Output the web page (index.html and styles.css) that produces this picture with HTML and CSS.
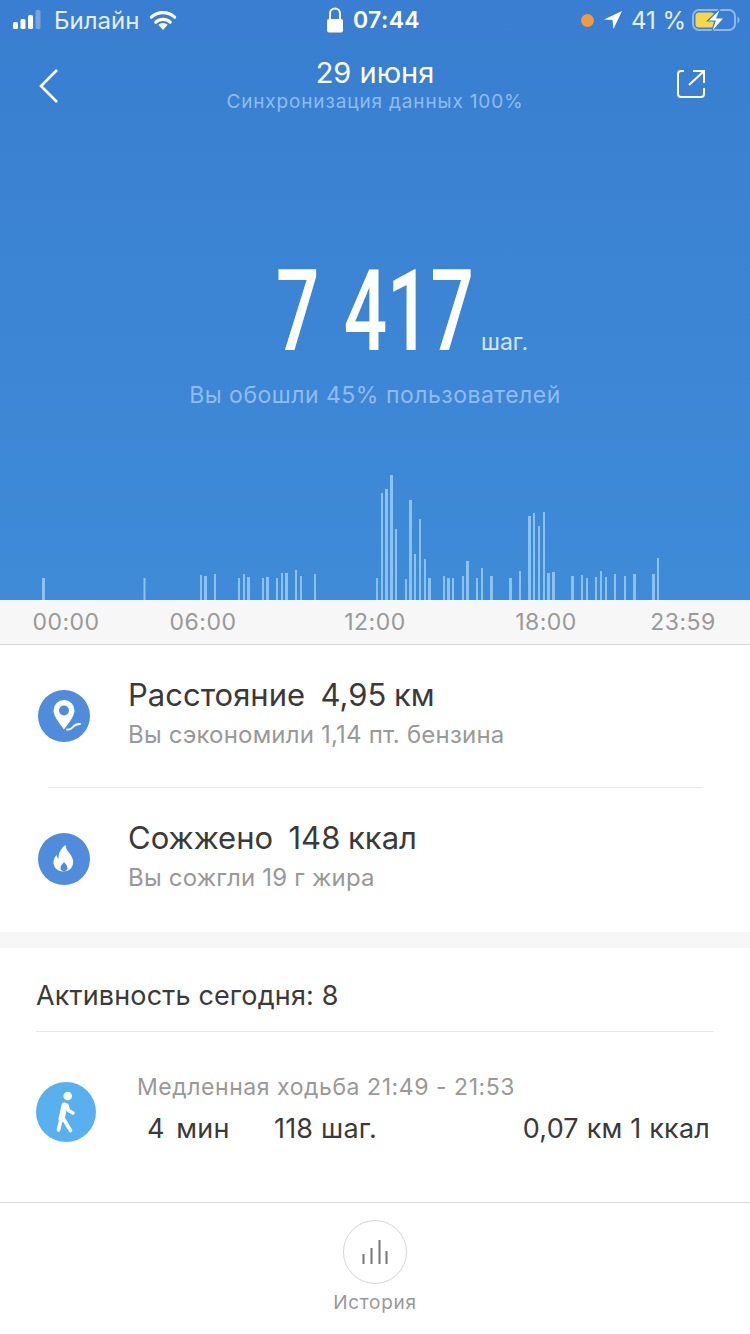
FILE: index.html
```html
<!DOCTYPE html>
<html lang="ru">
<head>
<meta charset="utf-8">
<title>Шаги</title>
<link rel="stylesheet" href="styles.css">
</head>
<body>
<div class="screen">
  <header class="hero">
    <div class="status">
      <div class="status-left">
        <svg class="signal" width="36" height="20" viewBox="0 0 36 20"><rect x="1" y="12" width="5" height="7" rx="1.500" fill="#fff"/><rect x="8.500" y="9" width="5" height="10" rx="1.500" fill="#fff"/><rect x="16" y="5" width="5" height="14" rx="1.500" fill="#fff"/><rect x="23.500" y="0" width="5" height="19" rx="1.500" fill="#fff" opacity=".3"/></svg>
        <span class="carrier">Билайн</span>
        <svg class="wifi" width="30" height="22" viewBox="0 0 30 22"><path d="M15 21l-4.600-5.200a6.800 6.800 0 0 1 9.200 0z" fill="#fff"/><path d="M7.800 13.200a10.600 10.600 0 0 1 14.400 0M3.400 8.200a17 17 0 0 1 23.200 0" fill="none" stroke="#fff" stroke-width="3.200" stroke-linecap="round"/></svg>
      </div>
      <div class="status-center">
        <svg class="lock" width="18" height="26" viewBox="0 0 18 26"><path d="M4 13V6.500a5 5 0 0 1 10 0V13" fill="none" stroke="#fff" stroke-width="2"/><rect x="1" y="12" width="16" height="13.500" rx="2" fill="#fff"/></svg>
        <span class="clock">07:44</span>
      </div>
      <div class="status-right">
        <span class="orange-dot"></span>
        <svg class="arrow" width="20" height="20" viewBox="0 0 20 20"><path d="M19 1L1 9.500l8.500.5L10.500 19z" fill="#fff"/></svg>
        <span class="percent">41 %</span>
        <svg class="battery" width="48" height="26" viewBox="0 0 48 26"><rect x="1" y="3" width="42" height="20" rx="6" fill="none" stroke="#8fb8e8" stroke-width="2"/><rect x="3.500" y="5.500" width="19" height="15" rx="3.500" fill="#f7d64a"/><path d="M45.500 9.500a4 4 0 0 1 0 7z" fill="#8fb8e8"/><path d="M29 0L14 14.500h8L19 26l15-15.500h-8z" fill="#3a7fd0"/><path d="M27.500 3L17 13.500h7L20.500 23.500 31 11.500h-7z" fill="#fff"/></svg>
      </div>
    </div>
    <nav class="nav">
      <svg class="back" width="22" height="36" viewBox="0 0 22 36"><path d="M19 2L3 18l16 16" fill="none" stroke="#fff" stroke-width="2.600"/></svg>
      <div class="nav-title">
        <div class="date">29 июня</div>
        <div class="sync">Синхронизация данных 100%</div>
      </div>
      <svg class="share" width="28" height="28" viewBox="0 0 28 28"><path d="M7 1H4a3 3 0 0 0-3 3v20a3 3 0 0 0 3 3h20a3 3 0 0 0 3-3v-6M12 15L27 1M16 1h11v12" fill="none" stroke="#fff" stroke-width="2"/></svg>
    </nav>
    <div class="total">
      <span class="steps"><span class="steps-num">7 417</span></span><span class="steps-unit">шаг.</span>
    </div>
    <div class="rank">Вы обошли 45% пользователей</div>
    <svg class="chart" width="750" height="130" viewBox="0 470 750 130">
      <g fill="#8cc2f2">
        <rect x="42" y="578" width="3" height="22"/><rect x="143.500" y="578" width="2" height="22"/><rect x="200" y="575" width="2" height="25"/><rect x="204" y="576" width="3" height="24"/><rect x="214" y="574" width="2" height="26"/><rect x="238" y="578" width="2" height="22"/><rect x="243" y="574" width="2" height="26"/><rect x="247" y="577" width="3" height="23"/><rect x="262" y="578" width="2" height="22"/><rect x="266" y="577" width="3" height="23"/><rect x="276" y="578" width="2" height="22"/><rect x="281" y="573" width="2" height="27"/><rect x="285" y="573" width="3" height="27"/><rect x="295" y="570" width="2" height="30"/><rect x="300" y="576" width="2" height="24"/><rect x="314" y="574" width="2" height="26"/>
        <rect x="376" y="578" width="2" height="22"/><rect x="381" y="493" width="2" height="107"/><rect x="385" y="489" width="3" height="111"/><rect x="390" y="475" width="3" height="125"/><rect x="395" y="529" width="2" height="71"/><rect x="405" y="579" width="2" height="21"/><rect x="409" y="500" width="3" height="100"/><rect x="414" y="554" width="2" height="46"/><rect x="419" y="519" width="2" height="81"/><rect x="424" y="559" width="2" height="41"/><rect x="428" y="578" width="3" height="22"/><rect x="443" y="576" width="2" height="24"/><rect x="447" y="578" width="3" height="22"/><rect x="452" y="578" width="2" height="22"/><rect x="462" y="576" width="2" height="24"/><rect x="466" y="561" width="3" height="39"/><rect x="476" y="578" width="2" height="22"/><rect x="481" y="568" width="2" height="32"/><rect x="490" y="576" width="3" height="24"/>
        <rect x="509" y="578" width="3" height="22"/><rect x="519" y="571" width="2" height="29"/><rect x="528" y="516" width="3" height="84"/><rect x="533" y="513" width="2" height="87"/><rect x="538" y="526" width="2" height="74"/><rect x="543" y="512" width="2" height="88"/><rect x="547" y="573" width="3" height="27"/><rect x="552" y="572" width="3" height="28"/><rect x="571" y="576" width="3" height="24"/><rect x="581" y="575" width="2" height="25"/><rect x="586" y="578" width="2" height="22"/><rect x="595" y="577" width="2" height="23"/><rect x="600" y="571" width="2" height="29"/><rect x="605" y="577" width="2" height="23"/><rect x="614" y="574" width="2" height="26"/><rect x="624" y="576" width="2" height="24"/><rect x="633" y="574" width="3" height="26"/><rect x="652" y="574" width="3" height="26"/><rect x="657" y="558" width="2" height="42"/>
      </g>
    </svg>
  </header>

  <div class="hours">
    <span>00:00</span><span>06:00</span><span>12:00</span><span>18:00</span><span>23:59</span>
  </div>

  <section class="summary">
    <div class="metric">
      <svg class="metric-icon" width="52" height="52" viewBox="0 0 52 52"><circle cx="26" cy="26" r="26" fill="#4f8cdc"/><path fill-rule="evenodd" d="M26 10a10.500 10.500 0 0 1 10.500 10.500c0 6-6 12.500-10.500 19C21.500 33 15.500 26.500 15.500 20.500A10.500 10.500 0 0 1 26 10zm0 5.500a5 5 0 1 0 0 10 5 5 0 0 0 0-10z" fill="#fff"/><path d="M29 39.500c3 .3 4.500-.5 6-2.500s2.500-3 7-3" fill="none" stroke="#fff" stroke-width="1.800" stroke-linecap="round"/></svg>
      <div class="metric-text">
        <div class="metric-main">Расстояние&nbsp; 4,95 км</div>
        <div class="metric-sub">Вы сэкономили 1,14 пт. бензина</div>
      </div>
    </div>
    <div class="metric-rule"></div>
    <div class="metric">
      <svg class="metric-icon" width="52" height="52" viewBox="0 0 52 52"><circle cx="26" cy="26" r="26" fill="#4f8cdc"/><path fill-rule="evenodd" d="M27.500 12c.5 5 3 6.500 5.500 10.500 1.500 2.500 2.500 5 2 8-.7 5-4.500 8-9.500 8-5.500 0-9.500-3.500-10-8.500-.3-3.500 1.500-6 3-8 .5 1.500 1 3 2.200 3.800C20 20 23 15.500 27.500 12zM26 29c-1.500 2-3.500 3.500-3.500 6 0 1.800 1.500 3.200 3.500 3.200s3.500-1.400 3.500-3.200c0-2.500-2-4-3.500-6z" fill="#fff"/></svg>
      <div class="metric-text">
        <div class="metric-main">Сожжено&nbsp; 148 ккал</div>
        <div class="metric-sub">Вы сожгли 19 г жира</div>
      </div>
    </div>
  </section>

  <section class="activity">
    <h2 class="activity-head">Активность сегодня: 8</h2>
    <div class="activity-row">
      <svg class="walk-icon" width="60" height="60" viewBox="0 0 60 60"><circle cx="30" cy="30" r="30" fill="#58b0ee"/><circle cx="31.700" cy="14" r="4.300" fill="#fff"/><path d="M28.500 23.500L25.500 37" fill="none" stroke="#fff" stroke-width="6" stroke-linecap="round"/><path d="M31 23.500l1.500 5 4.500 2.500M25 37.500L22.500 48M27 36l7.500 12.500" fill="none" stroke="#fff" stroke-width="3.600" stroke-linecap="round" stroke-linejoin="round"/></svg>
      <div class="activity-body">
        <div class="activity-title">Медленная ходьба 21:49 - 21:53</div>
        <div class="activity-values">
          <span class="val-time">4&nbsp; мин</span>
          <span class="val-steps">118 шаг.</span>
          <span class="val-rest">0,07 км 1 ккал</span>
        </div>
      </div>
    </div>
  </section>

  <footer class="tabbar">
    <span class="tab-circle">
      <svg width="26" height="24" viewBox="0 0 26 24"><path d="M1.500 14v10M9.500 8v16M17.500 0v24M24.500 11v13" fill="none" stroke="#777" stroke-width="2"/></svg>
    </span>
    <span class="tab-label">История</span>
  </footer>
</div>
</body>
</html>
```
FILE: styles.css
```css
* { box-sizing: border-box; }
html, body { margin: 0; padding: 0; }
body { font-family: Inter, Roboto, "Noto Sans", sans-serif; background: #fff; color: #3a3a3a; }
.screen { width: 750px; height: 1334px; overflow: hidden; display: flex; flex-direction: column; }

/* Blue header */
.hero { height: 600px; flex: none; display: flex; flex-direction: column; background: linear-gradient(180deg, #397ed0 0%, #3f8bd8 100%); color: #fff; }
.status { height: 40px; flex: none; display: grid; grid-template-columns: 1fr auto 1fr; align-items: center; padding: 0 10px 0 12px; }
.status-left { display: flex; align-items: center; }
.signal { margin-right: 6px; }
.carrier { font-size: 24px; margin-right: 9px; color: #e6f0fb; }
.status-center { display: flex; align-items: center; gap: 9px; margin-left: -6px; }
.clock { font-size: 23px; font-weight: 600; letter-spacing: .4px; }
.status-right { display: flex; align-items: center; justify-content: flex-end; }
.orange-dot { width: 13px; height: 13px; border-radius: 50%; background: #f29b38; margin-right: 9px; }
.arrow { margin-right: 8px; }
.percent { font-size: 24px; margin-right: 6px; color: #e6f0fb; }

.nav { height: 66px; flex: none; display: grid; grid-template-columns: 1fr auto 1fr; align-items: start; padding: 0 45px; }
.back { margin: 28px 0 0 -7px; }
.nav-title { text-align: center; padding-top: 16px; }
.date { font-size: 29px; line-height: 34px; }
.sync { font-size: 19px; line-height: 24px; color: #8fbcee; letter-spacing: .85px; }
.share { justify-self: end; margin-top: 30px; }

.total { height: 120px; margin-top: 146px; flex: none; display: flex; justify-content: center; align-items: baseline; padding-left: 54px; font-family: Roboto, sans-serif; }
.steps { display: inline-block; width: 205px; font-size: 113px; line-height: 120px; font-weight: 500; }
.steps-num { display: inline-block; white-space: nowrap; word-spacing: 8px; transform: scaleX(.675); transform-origin: 0 50%; }
.steps-unit { font-size: 23px; color: #d6e6f8; font-family: Inter, sans-serif; }
.rank { margin-top: 8px; text-align: center; font-size: 23px; line-height: 30px; letter-spacing: .5px; color: #8fbcee; }
.chart { margin-top: auto; display: block; flex: none; }

/* Time axis */
.hours { height: 45px; flex: none; display: grid; grid-template-columns: 132px 142px 202px 140px 134px; align-items: center; background: #f7f7f7; border-bottom: 1px solid #d6d6d6; font-size: 23px; color: #999; letter-spacing: .5px; }
.hours span { text-align: center; }

/* Distance and calories */
.summary { height: 303px; flex: none; border-bottom: 16px solid #f7f7f7; display: flex; flex-direction: column; }
.metric { height: 142px; flex: none; display: flex; align-items: center; padding-left: 38px; }
.metric-icon { flex: none; margin-right: 38px; }
.metric-text { padding-bottom: 6px; }
.metric-main { font-size: 31px; line-height: 38px; margin-bottom: 6px; word-spacing: -1px; }
.metric-sub { font-size: 24px; line-height: 30px; letter-spacing: .2px; color: #999; }
.metric-rule { height: 1px; flex: none; margin: 0 47px 0 48px; background: #e8e8e8; }

/* Activity list */
.activity { flex: 1; padding: 0 36px; }
.activity-head { margin: 0; height: 84px; padding-top: 12px; display: flex; align-items: center; border-bottom: 1px solid #e8e8e8; font-size: 27px; letter-spacing: .15px; font-weight: 400; }
.activity-row { display: flex; align-items: flex-start; padding-top: 40px; }
.walk-icon { flex: none; margin: 10px 41px 0 0; }
.activity-title { font-size: 23px; line-height: 30px; color: #999; letter-spacing: .55px; }
.activity-values { display: flex; width: 573px; margin-top: 10px; padding-left: 10px; font-size: 27px; line-height: 34px; letter-spacing: .2px; }
.val-time { width: 127px; word-spacing: -2px; }
.val-rest { margin-left: auto; }

/* Bottom tab */
.tabbar { height: 132px; flex: none; border-top: 1px solid #d8d8d8; display: flex; flex-direction: column; align-items: center; padding-top: 17px; }
.tab-circle { width: 64px; height: 64px; border: 1px solid #d8d8d8; border-radius: 50%; display: flex; align-items: center; justify-content: center; }
.tab-label { margin-top: 5px; font-size: 19px; line-height: 28px; color: #999; letter-spacing: .7px; }
```
